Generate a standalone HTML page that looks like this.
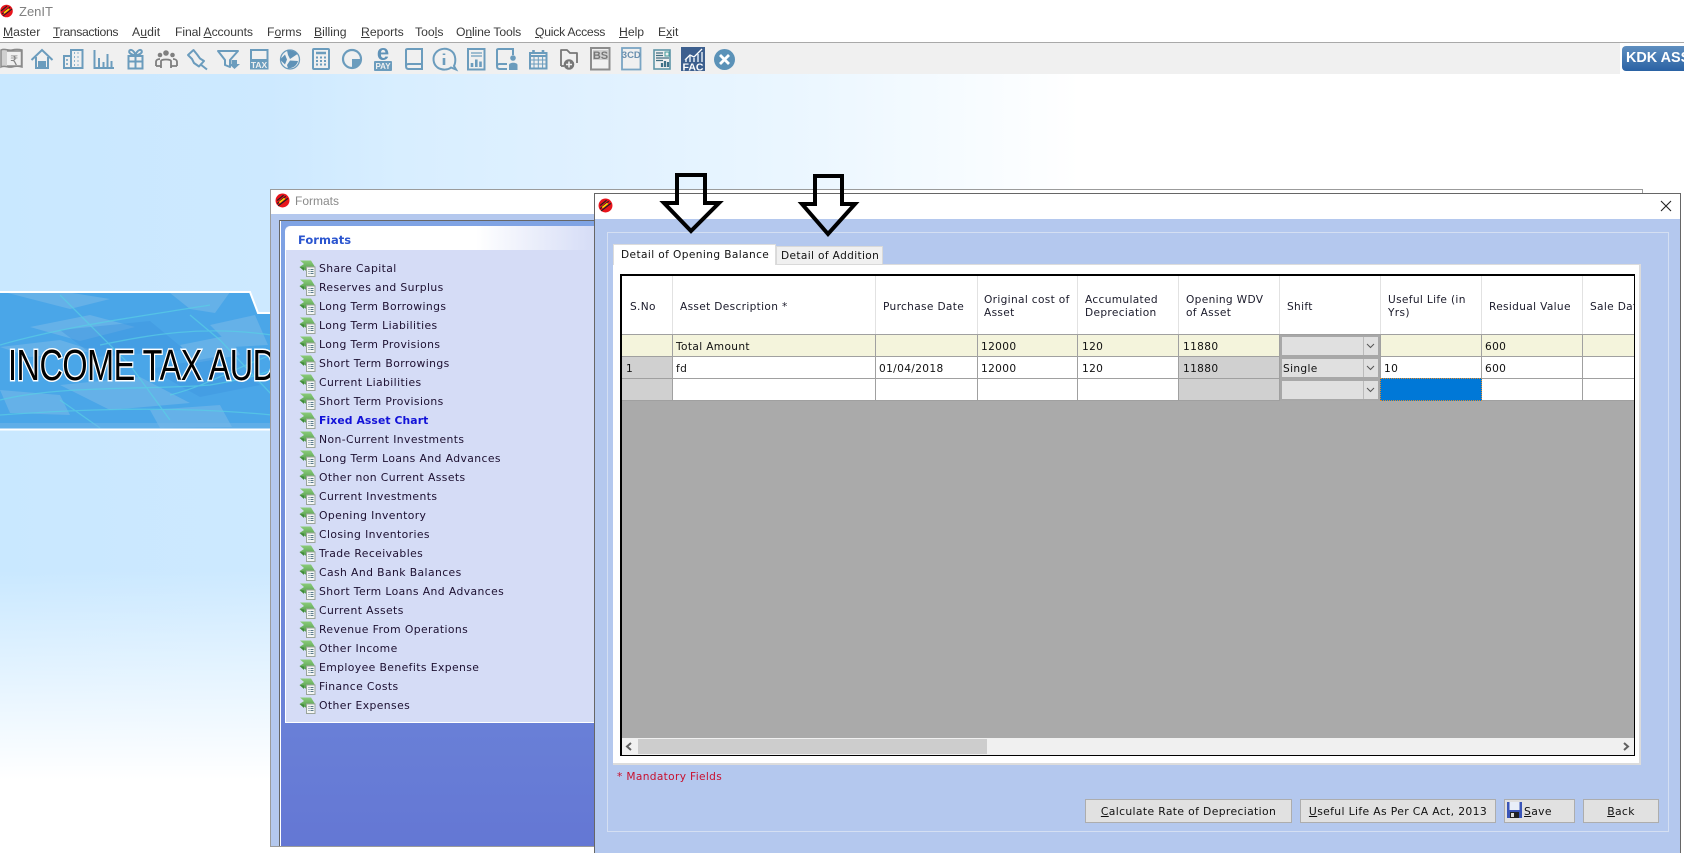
<!DOCTYPE html>
<html lang="en"><head><meta charset="utf-8"><title>ZenIT</title>
<style>
html,body{margin:0;padding:0;background:#fff}
body{position:relative;width:1684px;height:853px;overflow:hidden;font-family:"DejaVu Sans",sans-serif;font-size:11px;color:#1a1030}
div,span.a{position:absolute;box-sizing:border-box;white-space:nowrap}
.m{top:25px;font:12.2px/14px "Liberation Sans",sans-serif;color:#3a3a3a}
.f{left:319px;font-size:10.8px;line-height:14px;letter-spacing:.4px;color:#1c0f30}
.ti{position:absolute;left:299px;width:17px;height:17px}
.t{font-size:10.6px;line-height:13px;color:#1a1a2a;letter-spacing:.33px}
.h{top:301px}
.c{font-size:10.6px;line-height:14px;color:#111;letter-spacing:.35px}
.vl{width:1px;background:#a0a0a0}
.vh{width:1px;background:#e2e2e2;top:276px;height:58px}
.hl{height:1px;background:#a0a0a0;left:622px;width:1012px}
.g{background:#d0d0d0}
.cb{left:1280px;width:100px;height:22px;background:#e0e0e0;border:2px solid #a8a8a8}
.cb i{position:absolute;right:14px;top:0;bottom:0;width:1px;background:#bbb}
.cb svg{position:absolute;right:3px;top:6px}
.b{top:799px;height:24px;background:#e1e1e1;border:1px solid #adadad;font-size:10.8px;line-height:23px;text-align:center;color:#111;letter-spacing:.35px}
</style></head><body>

<div style="left:0;top:0;width:1684px;height:853px;background:linear-gradient(to bottom,rgba(255,255,255,0) 570px,#fff 780px),linear-gradient(to right,#c9e8ff 0,#cde9ff 270px,#d8eeff 400px,#e0f1ff 600px,#ecf7ff 820px,#fff 1080px)"></div>

<!-- title & menu -->
<div style="left:0;top:0;width:1684px;height:42px;background:#fff"></div>
<svg style="position:absolute;left:0;top:4px" width="14" height="14" viewBox="0 0 14 14"><circle cx="6.500" cy="7" r="6.300" fill="#e8141c"/><path d="M2 10L10 3M3 12L12 5M1 7L7 2" stroke="#222" stroke-width="1.100"/><path d="M4 9l5-4" stroke="#ffd800" stroke-width="1.600"/></svg>
<div style="left:19px;top:4px;font:13px/15px 'Liberation Sans',sans-serif;color:#808080">ZenIT</div>
<div class="m" style="left:3px"><u>M</u>aster</div>
<div class="m" style="left:53px;letter-spacing:-.35px"><u>T</u>ransactions</div>
<div class="m" style="left:132px;letter-spacing:.1px">A<u>u</u>dit</div>
<div class="m" style="left:175px;letter-spacing:-.1px">Final <u>A</u>ccounts</div>
<div class="m" style="left:267px">F<u>o</u>rms</div>
<div class="m" style="left:314px"><u>B</u>illing</div>
<div class="m" style="left:361px"><u>R</u>eports</div>
<div class="m" style="left:415px">Too<u>l</u>s</div>
<div class="m" style="left:456px;letter-spacing:-.15px">O<u>n</u>line Tools</div>
<div class="m" style="left:535px;letter-spacing:-.25px"><u>Q</u>uick Access</div>
<div class="m" style="left:619px"><u>H</u>elp</div>
<div class="m" style="left:658px">E<u>x</u>it</div>

<!-- toolbar -->
<div style="left:0;top:42px;width:1684px;height:32px;background:#f0f0f0;border-top:1px solid #a9a9a9"></div>
<div style="left:1620px;top:43px;width:64px;height:31px;background:#fff"></div>
<div style="left:1622px;top:46px;width:62px;height:25px;background:linear-gradient(#5f8fc0,#2a62a4);border-radius:4px 0 0 4px;color:#fff;font:bold 14.4px/25px 'Liberation Sans',sans-serif;padding-left:4px;overflow:hidden">KDK ASS</div>

<svg style="position:absolute;left:0;top:0" width="760" height="76" viewBox="0 0 760 76" fill="none" stroke="#6b9cbd" stroke-width="2">
<!-- rupee note -->
<g stroke="#8a8a8a"><path d="M1 50c4-2 7 1 11 0s6-1 10 0v17c-4-1-6-1-10 0s-7-2-11 0z" stroke-width="1.500" fill="#d0d0d0"/><path d="M7 51h14.500v15H7" fill="#f0f0f0" stroke-width="1.500"/></g>
<text x="10" y="65" font-family="'DejaVu Sans',sans-serif" font-size="13" fill="#858585" stroke="none">₹</text>
<!-- home -->
<path d="M31.500 60L42 50L52.500 60M36 57V68H48V57"/><path d="M39 68V62H45V68Z" fill="#6b9cbd"/>
<!-- building -->
<path d="M71 68V50H82.500V68ZM71 56H64V68H71M63 68H83"/><path d="M74 53h1m2.500 0h1M74 57h1m2.500 0h1M74 61h1m2.500 0h1M74 65h1m2.500 0h1M66 60h2M66 64h2" stroke-width="1.600"/>
<!-- bars -->
<path d="M94.500 50V68H114M99 68V58M103.500 68V62M107.500 68V54M111.500 68V61"/>
<!-- gift -->
<path d="M128.500 56H142.500V68.500H128.500ZM128 61.500H143M135.500 56V68.500M135.500 55.500C132 55 128 53 129.500 50.500C131.500 48.500 135 52 135.500 55.500C136 52 139.500 48.500 141.500 50.500C143 53 139 55 135.500 55.500Z"/>
<!-- people -->
<g stroke="#7f7f7f"><circle cx="160" cy="55" r="2.300" fill="#7f7f7f" stroke="none"/><circle cx="166" cy="53" r="2.800" fill="#7f7f7f" stroke="none"/><circle cx="172.500" cy="55" r="2.300" fill="#7f7f7f" stroke="none"/><path d="M156 66V62C156 60 158 59 160 59M177 66V62C177 60 175 59 173 59M161 68V61C161 59 171 59 171 61V68M156 66H161M171 66H177" stroke-width="1.800"/></g>
<!-- pin -->
<path d="M193.500 50L188 55L192 59L194 63L199 66.500L204 61L200 58.500L197.500 55Z" stroke-linejoin="round"/><path d="M200 64L207 69.500"/>
<!-- funnel -->
<path d="M218 51H238L230 60V67L225 65V60Z" stroke-linejoin="round"/><path d="M231.500 60H237V64H240L234.500 69L229 64H231.500Z" fill="#6b9cbd" stroke="none"/>
<!-- TAX -->
<rect x="251" y="50" width="16.500" height="18.500" stroke-width="2"/><rect x="250" y="59" width="18" height="10" fill="#6b9cbd" stroke="none"/>
<text x="259" y="68" text-anchor="middle" font-family="'Liberation Sans',sans-serif" font-size="8.500" font-weight="bold" fill="#f0f0f0" stroke="none">TAX</text>
<!-- pie 1 -->
<circle cx="290" cy="59.500" r="9.500" stroke-width="1.300"/><path d="M280 59.500L285 54.500L287 59.500L285 64.500Z M287 50.500C291 50 295 51 297.500 54L290 59L288 55Z M290 60.500L298 61C297 65 294 68 288 68.500L287 65Z" fill="#5f92b7" stroke="none"/>
<!-- calculator -->
<rect x="313" y="49" width="16" height="20" rx="1"/><path d="M316 53H326" stroke-width="2.500"/><path d="M316 57.500h2m2 0h2m2 0h2M316 61h2m2 0h2m2 0h2M316 64.500h2m2 0h2m2 0h2" stroke-width="2"/>
<!-- pie 2 -->
<circle cx="352" cy="59" r="9" stroke-width="2.200"/><path d="M352 59H361C361 64 357 68 352 68Z" fill="#6b9cbd" stroke="none"/>
<!-- e pay -->
<text x="383" y="60" text-anchor="middle" font-family="'Liberation Sans',sans-serif" font-size="22" font-weight="bold" fill="#5f92b7" stroke="none">e</text>
<rect x="374" y="61" width="18" height="10" rx="1" fill="#6b9cbd" stroke="none"/>
<text x="383" y="69" text-anchor="middle" font-family="'Liberation Sans',sans-serif" font-size="8" font-weight="bold" fill="#f0f0f0" stroke="none">PAY</text>
<!-- book -->
<path d="M406 66V50C406 49 407 49 408 49H422V69H408.500C407 69 406 68 406 66ZM406 66C406 64.500 407 64 408.500 64H422"/>
<!-- info -->
<path d="M454 66C456 62 456 55 452 51.500C447 47.500 440 48 436 52.500C432 57 433 64 437.500 67.500C442 70.500 448 70 451 67.500L456 69.500Z"/><path d="M444 53.500v1.500M444 58v7" stroke-width="2.600"/>
<!-- report -->
<rect x="468" y="49" width="16.500" height="20.500"/><path d="M471 53H482M471 56H482" stroke-width="1.300"/><path d="M472 67V63M476.300 67V59.500M480.500 67V61.500" stroke-width="2.600"/>
<!-- book user -->
<path d="M497 66V50C497 49 498 49 499 49H513V55M497 66C497 64.500 498 64 499.500 64H507M497 66C497 68 498 69 499.500 69H507"/><circle cx="513" cy="58" r="2.800" fill="#6b9cbd" stroke="none"/><path d="M509 70V65C509 62 517.500 62 517.500 65V70Z" fill="#6b9cbd" stroke="none"/>
<!-- calendar -->
<rect x="530" y="53" width="16.500" height="15.500"/><path d="M533.500 50V54M543 50V54" stroke-width="2.600"/><path d="M530 56H547" stroke-width="2"/><path d="M530 60H547M530 64H547M534 56V68M538.300 56V68M542.600 56V68" stroke-width="1"/>
<!-- folder plus -->
<path d="M561 66V50H567L570 53H577V63" stroke="#777" stroke-width="1.800" stroke-linejoin="round"/><path d="M561 66H564" stroke="#777" stroke-width="1.800"/><circle cx="569" cy="64.500" r="5.300" fill="#777" stroke="none"/><path d="M566 64.500H572M569 61.500V67.500" stroke="#f0f0f0" stroke-width="1.600"/>
<!-- BS -->
<rect x="591" y="48" width="18.500" height="21.500" stroke="#8c8c8c" stroke-width="2"/><rect x="593" y="50" width="15" height="10" fill="#d0d0d0" stroke="none"/>
<text x="600.500" y="59" text-anchor="middle" font-family="'Liberation Sans',sans-serif" font-size="11" font-weight="bold" fill="#777" stroke="none">BS</text>
<!-- 3CD -->
<rect x="622" y="48" width="18.500" height="21.500" stroke="#7aa5c4" stroke-width="1.800"/>
<text x="631.300" y="58" text-anchor="middle" font-family="'Liberation Sans',sans-serif" font-size="9.500" font-weight="bold" fill="#6a8fae" stroke="none">3CD</text>
<!-- doc -->
<rect x="654" y="50" width="16" height="19" stroke="#5f96a8" stroke-width="1.600"/><path d="M656 53H663M656 55.500H663M656 58H669M656 60.500H663" stroke="#406e80" stroke-width="1.200"/><rect x="665" y="52" width="4" height="4" stroke="#3f9a9a" stroke-width="1"/><path d="M662 67V63M665 67V61M668 67V62" stroke="#3f7288" stroke-width="2.200"/>
<!-- FAC -->
<rect x="681" y="47" width="24" height="24" fill="#3d5f8e" stroke="none"/><path d="M685 60L690 55L694 57L702 49" stroke="#fff" stroke-width="1.300"/><path d="M686 62V59M690 62V56M694 62V58M698 62V54M702 62V52" stroke="#dfe8f2" stroke-width="1.500"/>
<text x="693" y="70.500" text-anchor="middle" font-family="'Liberation Sans',sans-serif" font-size="10.500" font-weight="bold" fill="#fff" stroke="none">FAC</text>
<!-- close -->
<circle cx="724.500" cy="59.500" r="10.500" fill="#5b92b8" stroke="none"/><path d="M720 55L729 64M729 55L720 64" stroke="#fff" stroke-width="2.800"/>
</svg>

<!-- banner -->
<svg style="position:absolute;left:0;top:285px" width="272" height="150" viewBox="0 0 272 150">
<defs><clipPath id="bc"><path d="M0 7H250L258 28H272V145H0Z"/></clipPath></defs>
<g clip-path="url(#bc)">
<rect width="272" height="150" fill="#4aa6e8"/>
<path d="M0 6L70 24L110 14L60 6ZM30 42L90 30L135 42L80 56ZM170 8L230 7L215 28L190 24ZM210 40L255 30L268 60L232 62ZM0 62L60 55L95 66L30 72ZM60 100L140 92L190 118L110 125ZM180 60L230 50L240 70L195 78ZM0 105L60 110L70 130L10 128ZM150 125L220 120L232 142L160 143Z" fill="#7fbbe8" opacity=".5"/>
<path d="M60 45L150 36L185 65L95 72ZM150 84L215 72L260 100L200 112Z" fill="#3f95e0" opacity=".45"/>
<path d="M0 60C70 40 150 30 210 20M60 10L130 80L170 135M100 60C150 50 200 40 272 50M0 115C60 100 150 105 210 100C240 95 260 90 272 85M170 110C210 100 240 80 272 70M190 30L220 55L272 110M0 130C70 125 170 120 272 130M60 115L100 143" fill="none" stroke="#58cfe6" stroke-width="1.300" opacity=".7"/>
<rect y="138" width="272" height="6" fill="#7bb8e8" opacity=".45"/>
</g>
<path d="M0 7H250L258 28H272" fill="none" stroke="#fff" stroke-width="2"/>
<path d="M0 144.500H272" stroke="#fff" stroke-width="2"/>
</svg>
<div style="left:0;top:340px;width:270px;height:52px;overflow:hidden">
<span class="a" style="left:8px;top:1px;font:44px/50px 'Liberation Sans',sans-serif;color:#000;-webkit-text-stroke:3px #fff;paint-order:stroke fill;transform:scaleX(.735);transform-origin:0 0;letter-spacing:-.6px">INCOME TAX AUD</span></div>

<!-- formats window -->
<div style="left:270px;top:189px;width:1373px;height:658px;background:#b4c8ee;border:1px solid #9b9b9b"></div>
<div style="left:271px;top:190px;width:1371px;height:24px;background:#fff"></div>
<svg style="position:absolute;left:275px;top:193px" width="15" height="15" viewBox="0 0 14 14"><circle cx="7" cy="7" r="6.500" fill="#e8141c"/><path d="M2 10L10 3M3 12L12 5M2 7L8 2" stroke="#222" stroke-width="1.100"/><path d="M4 9l5-4" stroke="#ffd800" stroke-width="1.600"/></svg>
<div style="left:295px;top:194px;font:12px/15px 'Liberation Sans',sans-serif;color:#8a8a8a">Formats</div>
<div style="left:279px;top:220px;width:320px;height:626px;background:linear-gradient(#7fa3e4,#6477d4);border-left:1px solid #666;border-top:1px solid #666;box-shadow:inset 1px 0 0 #fff"></div>
<div style="left:285px;top:226px;width:320px;height:497px;background:#d5dcf6;border-left:1px solid #fff;border-bottom:1px solid #fff;border-radius:5px 0 0 0"></div>
<div style="left:286px;top:226px;width:310px;height:24px;background:linear-gradient(to right,#fff 0,#fff 190px,#d5dcf6 100%);border-radius:5px 0 0 0"></div>
<div style="left:298px;top:233px;font-size:11.5px;line-height:14px;font-weight:bold;color:#2b55cf">Formats</div>

<svg width="0" height="0" style="position:absolute"><defs><linearGradient id="gr" x1="0" y1="0" x2="0" y2="1"><stop offset="0" stop-color="#8ccc7a"/><stop offset="1" stop-color="#4f9a4a"/></linearGradient><g id="ti"><path d="M1 .5H12L16 7H7.500V11L.5 7L5 4Z" fill="url(#gr)"/><path d="M.5 7L5 7.500V11Z" fill="#3f8a3a"/><rect x="7.500" y="7" width="8.500" height="9.500" fill="#f4f6f4" stroke="#9aa49a"/><path d="M9.500 9.500h1m1 0h3M9.500 11.500h1m1 0h3M9.500 13.500h1m1 0h3" stroke="#5a7a8a" stroke-width="1"/></g></defs></svg>
<svg class="ti" style="top:260px" viewBox="0 0 17 17"><use href="#ti"/></svg><div class="f" style="top:262px">Share Capital</div>
<svg class="ti" style="top:279px" viewBox="0 0 17 17"><use href="#ti"/></svg><div class="f" style="top:281px">Reserves and Surplus</div>
<svg class="ti" style="top:298px" viewBox="0 0 17 17"><use href="#ti"/></svg><div class="f" style="top:300px">Long Term Borrowings</div>
<svg class="ti" style="top:317px" viewBox="0 0 17 17"><use href="#ti"/></svg><div class="f" style="top:319px">Long Term Liabilities</div>
<svg class="ti" style="top:336px" viewBox="0 0 17 17"><use href="#ti"/></svg><div class="f" style="top:338px">Long Term Provisions</div>
<svg class="ti" style="top:355px" viewBox="0 0 17 17"><use href="#ti"/></svg><div class="f" style="top:357px">Short Term Borrowings</div>
<svg class="ti" style="top:374px" viewBox="0 0 17 17"><use href="#ti"/></svg><div class="f" style="top:376px">Current Liabilities</div>
<svg class="ti" style="top:393px" viewBox="0 0 17 17"><use href="#ti"/></svg><div class="f" style="top:395px">Short Term Provisions</div>
<svg class="ti" style="top:412px" viewBox="0 0 17 17"><use href="#ti"/></svg><div class="f" style="top:414px;font-weight:bold;color:#1212d8;letter-spacing:.1px">Fixed Asset Chart</div>
<svg class="ti" style="top:431px" viewBox="0 0 17 17"><use href="#ti"/></svg><div class="f" style="top:433px">Non-Current Investments</div>
<svg class="ti" style="top:450px" viewBox="0 0 17 17"><use href="#ti"/></svg><div class="f" style="top:452px">Long Term Loans And Advances</div>
<svg class="ti" style="top:469px" viewBox="0 0 17 17"><use href="#ti"/></svg><div class="f" style="top:471px">Other non Current Assets</div>
<svg class="ti" style="top:488px" viewBox="0 0 17 17"><use href="#ti"/></svg><div class="f" style="top:490px">Current Investments</div>
<svg class="ti" style="top:507px" viewBox="0 0 17 17"><use href="#ti"/></svg><div class="f" style="top:509px">Opening Inventory</div>
<svg class="ti" style="top:526px" viewBox="0 0 17 17"><use href="#ti"/></svg><div class="f" style="top:528px">Closing Inventories</div>
<svg class="ti" style="top:545px" viewBox="0 0 17 17"><use href="#ti"/></svg><div class="f" style="top:547px">Trade Receivables</div>
<svg class="ti" style="top:564px" viewBox="0 0 17 17"><use href="#ti"/></svg><div class="f" style="top:566px">Cash And Bank Balances</div>
<svg class="ti" style="top:583px" viewBox="0 0 17 17"><use href="#ti"/></svg><div class="f" style="top:585px">Short Term Loans And Advances</div>
<svg class="ti" style="top:602px" viewBox="0 0 17 17"><use href="#ti"/></svg><div class="f" style="top:604px">Current Assets</div>
<svg class="ti" style="top:621px" viewBox="0 0 17 17"><use href="#ti"/></svg><div class="f" style="top:623px">Revenue From Operations</div>
<svg class="ti" style="top:640px" viewBox="0 0 17 17"><use href="#ti"/></svg><div class="f" style="top:642px">Other Income</div>
<svg class="ti" style="top:659px" viewBox="0 0 17 17"><use href="#ti"/></svg><div class="f" style="top:661px">Employee Benefits Expense</div>
<svg class="ti" style="top:678px" viewBox="0 0 17 17"><use href="#ti"/></svg><div class="f" style="top:680px">Finance Costs</div>
<svg class="ti" style="top:697px" viewBox="0 0 17 17"><use href="#ti"/></svg><div class="f" style="top:699px">Other Expenses</div>

<!-- front window -->
<div style="left:594px;top:193px;width:1087px;height:660px;background:#b4c8ee;border:1px solid #666;border-bottom:0"></div>
<div style="left:595px;top:194px;width:1085px;height:25px;background:#fff"></div>
<svg style="position:absolute;left:598px;top:198px" width="15" height="15" viewBox="0 0 14 14"><circle cx="7" cy="7" r="6.500" fill="#e8141c"/><path d="M2 10L10 3M3 12L12 5M2 7L8 2" stroke="#222" stroke-width="1.100"/><path d="M4 9l5-4" stroke="#ffd800" stroke-width="1.600"/></svg>
<svg style="position:absolute;left:1660px;top:200px" width="12" height="12" viewBox="0 0 12 12"><path d="M1 1L11 11M11 1L1 11" stroke="#222" stroke-width="1.100"/></svg>
<div style="left:607px;top:232px;width:1062px;height:600px;border:1px solid #d4dff2"></div>

<!-- tabs -->
<div style="left:613px;top:264px;width:1028px;height:501px;background:#fff;border:1px solid #dcdcdc;border-width:1px 2px 2px 0"></div>
<div style="left:776px;top:246px;width:107px;height:19px;background:#f0f0f0;border:1px solid #d9d9d9;font-size:10.6px;line-height:19px;padding-left:4px;color:#111;letter-spacing:.35px">Detail of Addition</div>
<div style="left:613px;top:244px;width:163px;height:21px;background:#fff;border:1px solid #dcdcdc;border-bottom:0;font-size:10.6px;line-height:20px;padding-left:7px;color:#111;letter-spacing:.39px">Detail of Opening Balance</div>

<!-- grid -->
<div style="left:620px;top:274px;width:1015px;height:482px;border:2px solid #000;border-bottom-width:1px;border-right-width:1px;background:#aaa;overflow:hidden"></div>
<div style="left:622px;top:276px;width:1012px;height:58px;background:#fff"></div>
<div style="left:622px;top:334px;width:1012px;height:22px;background:#f4f4dc"></div>
<div style="left:622px;top:356px;width:1012px;height:44px;background:#fff"></div>
<div class="g" style="left:622px;top:356px;width:50px;height:44px"></div>
<div class="g" style="left:1178px;top:356px;width:102px;height:44px"></div>
<div class="vh" style="left:672px"></div><div class="vh" style="left:875px"></div><div class="vh" style="left:977px"></div><div class="vh" style="left:1077px"></div><div class="vh" style="left:1178px"></div><div class="vh" style="left:1279px"></div><div class="vh" style="left:1380px"></div><div class="vh" style="left:1481px"></div><div class="vh" style="left:1582px"></div>
<div class="vl" style="left:672px;top:334px;height:66px"></div><div class="vl" style="left:875px;top:334px;height:66px"></div><div class="vl" style="left:977px;top:334px;height:66px"></div><div class="vl" style="left:1077px;top:334px;height:66px"></div><div class="vl" style="left:1178px;top:334px;height:66px"></div><div class="vl" style="left:1279px;top:334px;height:66px"></div><div class="vl" style="left:1380px;top:334px;height:66px"></div><div class="vl" style="left:1481px;top:334px;height:66px"></div><div class="vl" style="left:1582px;top:334px;height:66px"></div>
<div class="hl" style="top:334px"></div><div class="hl" style="top:356px"></div><div class="hl" style="top:378px"></div><div class="hl" style="top:400px"></div>

<div class="t h" style="left:630px">S.No</div>
<div class="t h" style="left:680px">Asset Description *</div>
<div class="t h" style="left:883px">Purchase Date</div>
<div class="t" style="left:984px;top:294px">Original cost of<br>Asset</div>
<div class="t" style="left:1085px;top:294px">Accumulated<br>Depreciation</div>
<div class="t" style="left:1186px;top:294px">Opening WDV<br>of Asset</div>
<div class="t h" style="left:1287px">Shift</div>
<div class="t" style="left:1388px;top:294px">Useful Life (in<br>Yrs)</div>
<div class="t h" style="left:1489px">Residual Value</div>
<div style="left:1583px;top:276px;width:51px;height:58px;overflow:hidden"><span class="a t" style="left:7px;top:25px">Sale Date</span></div>

<div class="cb" style="top:335px"><i></i><svg width="9" height="6" viewBox="0 0 9 6"><path d="M1 1L4.500 4.500L8 1" fill="none" stroke="#555"/></svg></div>
<div class="cb" style="top:357px"><i></i><svg width="9" height="6" viewBox="0 0 9 6"><path d="M1 1L4.500 4.500L8 1" fill="none" stroke="#555"/></svg></div>
<div class="cb" style="top:379px"><i></i><svg width="9" height="6" viewBox="0 0 9 6"><path d="M1 1L4.500 4.500L8 1" fill="none" stroke="#555"/></svg></div>

<div class="c" style="left:676px;top:340px">Total Amount</div>
<div class="c" style="left:981px;top:340px">12000</div>
<div class="c" style="left:1082px;top:340px">120</div>
<div class="c" style="left:1183px;top:340px">11880</div>
<div class="c" style="left:1485px;top:340px">600</div>
<div class="c" style="left:626px;top:362px">1</div>
<div class="c" style="left:676px;top:362px">fd</div>
<div class="c" style="left:879px;top:362px">01/04/2018</div>
<div class="c" style="left:981px;top:362px">12000</div>
<div class="c" style="left:1082px;top:362px">120</div>
<div class="c" style="left:1183px;top:362px">11880</div>
<div class="c" style="left:1283px;top:362px">Single</div>
<div class="c" style="left:1384px;top:362px">10</div>
<div class="c" style="left:1485px;top:362px">600</div>
<div style="left:1380px;top:378px;width:102px;height:23px;background:#0078d7;border:1px dotted #e08a2c"></div>

<!-- scrollbar -->
<div style="left:622px;top:738px;width:1012px;height:17px;background:#f0f0f0"></div>
<div style="left:638px;top:739px;width:349px;height:15px;background:#cdcdcd"></div>
<svg style="position:absolute;left:625px;top:742px" width="8" height="9" viewBox="0 0 8 9"><path d="M6 1L2 4.500L6 8" fill="none" stroke="#606060" stroke-width="2"/></svg>
<svg style="position:absolute;left:1622px;top:742px" width="8" height="9" viewBox="0 0 8 9"><path d="M2 1L6 4.500L2 8" fill="none" stroke="#606060" stroke-width="2"/></svg>

<div style="left:617px;top:770px;font-size:10.6px;line-height:14px;color:#c8102e;letter-spacing:.35px">* Mandatory Fields</div>

<div class="b" style="left:1085px;width:207px"><u>C</u>alculate Rate of Depreciation</div>
<div class="b" style="left:1300px;width:196px"><u>U</u>seful Life As Per CA Act, 2013</div>
<div class="b" style="left:1504px;width:71px;text-align:left;padding-left:19px"><u>S</u>ave</div>
<svg style="position:absolute;left:1507px;top:802px" width="15" height="16" viewBox="0 0 15 16"><rect width="15" height="16" fill="#3a55b8"/><rect x="2.500" y="0" width="10" height="8" fill="#e8eef8"/><rect x="3" y="10" width="9" height="6" fill="#222"/><rect x="4" y="11" width="3" height="4" fill="#ddd"/></svg>
<div class="b" style="left:1583px;width:76px"><u>B</u>ack</div>

<!-- arrows -->
<svg style="position:absolute;left:650px;top:165px" width="220" height="80" viewBox="650 165 220 80" fill="none" stroke="#000" stroke-width="4" stroke-linejoin="miter">
<path d="M677 175H705V203H719L691 231L664 203H677Z"/>
<path d="M815 176H842V204H855L828 234L802 204H815Z"/>
</svg>
</body></html>
